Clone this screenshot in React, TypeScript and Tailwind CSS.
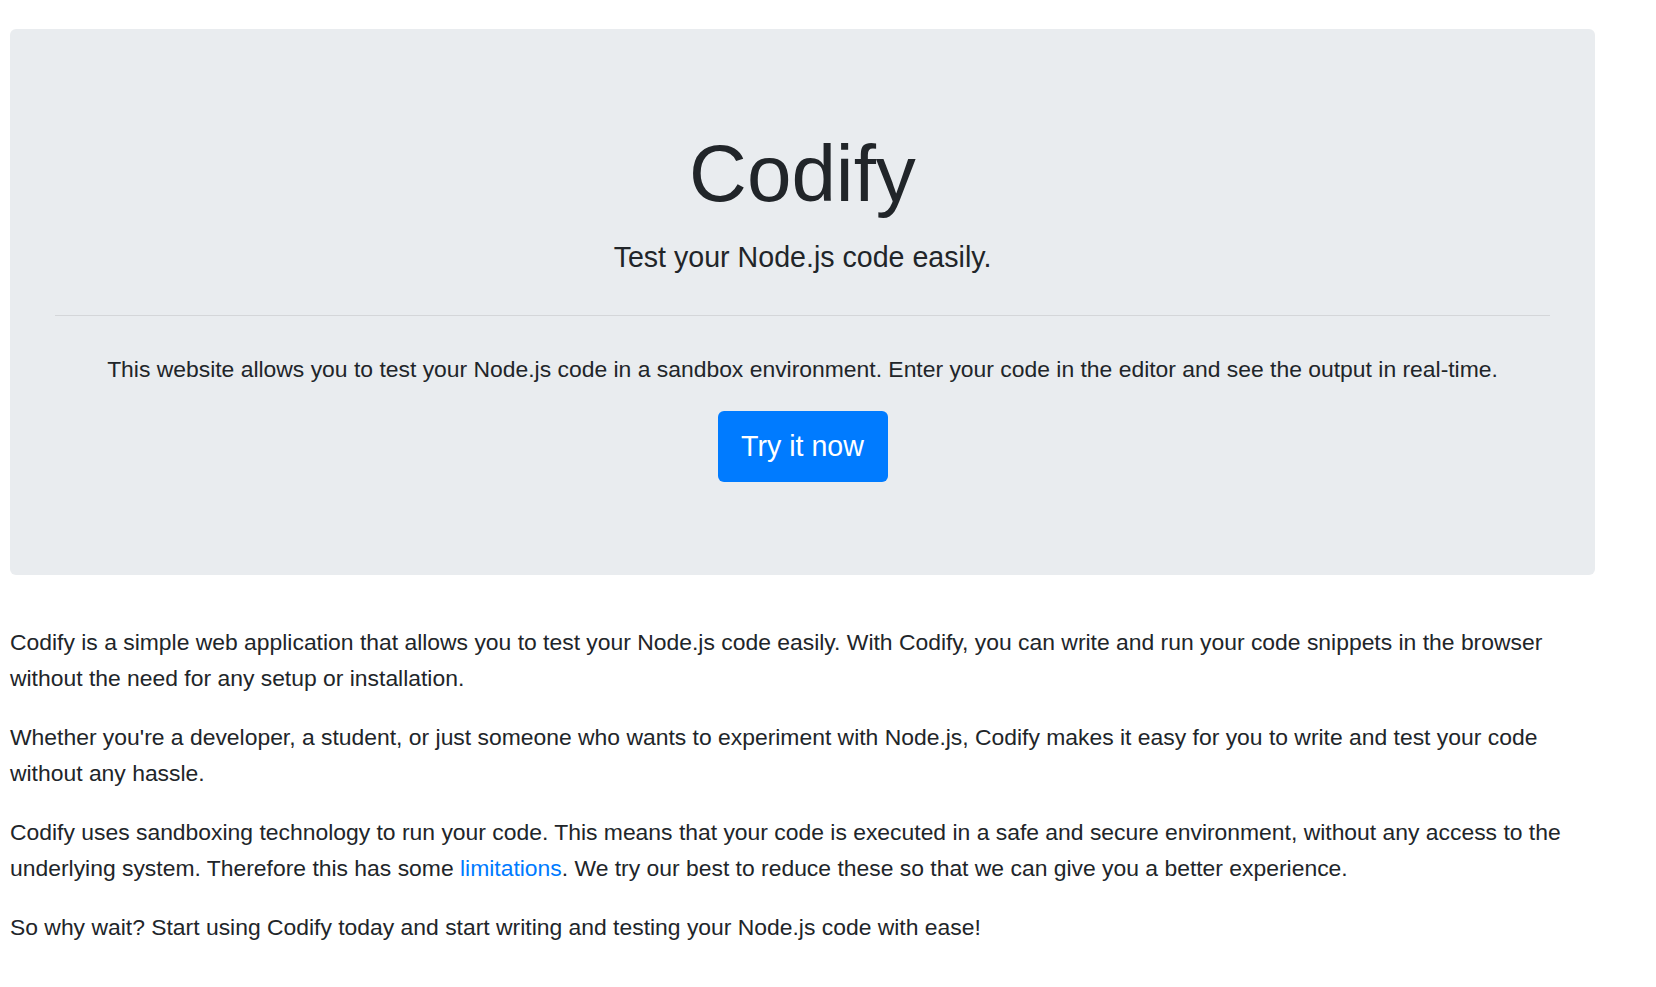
export default function App() {
  return (
    <div className="min-h-screen bg-white text-[#212529]" style={{ fontFamily: '"Liberation Sans", Arial, sans-serif' }}>
      <div className="pt-[29px] pl-[10px]">
        <div className="w-[1585px] rounded-[6px] bg-[#e9ecef] px-[45px] pt-[97px] pb-[93px] text-center">
          <h1 className="text-[80px] leading-[96px] font-normal">Codify</h1>
          <p className="mt-[14px] text-[28.6px] leading-[43px]">Test your Node.js code easily.</p>
          <hr className="mt-[36px] border-0 border-t-[1.5px] border-[rgba(0,0,0,0.09)]" />
          <p className="mt-[36px] text-[22.9px] leading-[34px]">
            This website allows you to test your Node.js code in a sandbox environment. Enter your code in the editor and see the output in real-time.
          </p>
          <div className="mt-[25px] flex justify-center">
            <a
              href="#"
              className="flex h-[71px] w-[170px] items-center justify-center rounded-[6px] bg-[#007bff] text-[28.6px] leading-[43px] text-white"
            >
              Try it now
            </a>
          </div>
        </div>
        <div className="w-[1585px] pt-[49px] text-[22.9px] leading-[36px]">
          <p className="mb-[23px]">
            Codify is a simple web application that allows you to test your Node.js code easily. With Codify, you can write and run your code snippets in the browser without the need for any setup or installation.
          </p>
          <p className="mb-[23px]">
            Whether you're a developer, a student, or just someone who wants to experiment with Node.js, Codify makes it easy for you to write and test your code without any hassle.
          </p>
          <p className="mb-[23px]">
            Codify uses sandboxing technology to run your code. This means that your code is executed in a safe and secure environment, without any access to the underlying system. Therefore this has some <a href="#" className="text-[#007bff]">limitations</a>. We try our best to reduce these so that we can give you a better experience.
          </p>
          <p className="mb-[23px]">
            So why wait? Start using Codify today and start writing and testing your Node.js code with ease!
          </p>
        </div>
      </div>
    </div>
  );
}
